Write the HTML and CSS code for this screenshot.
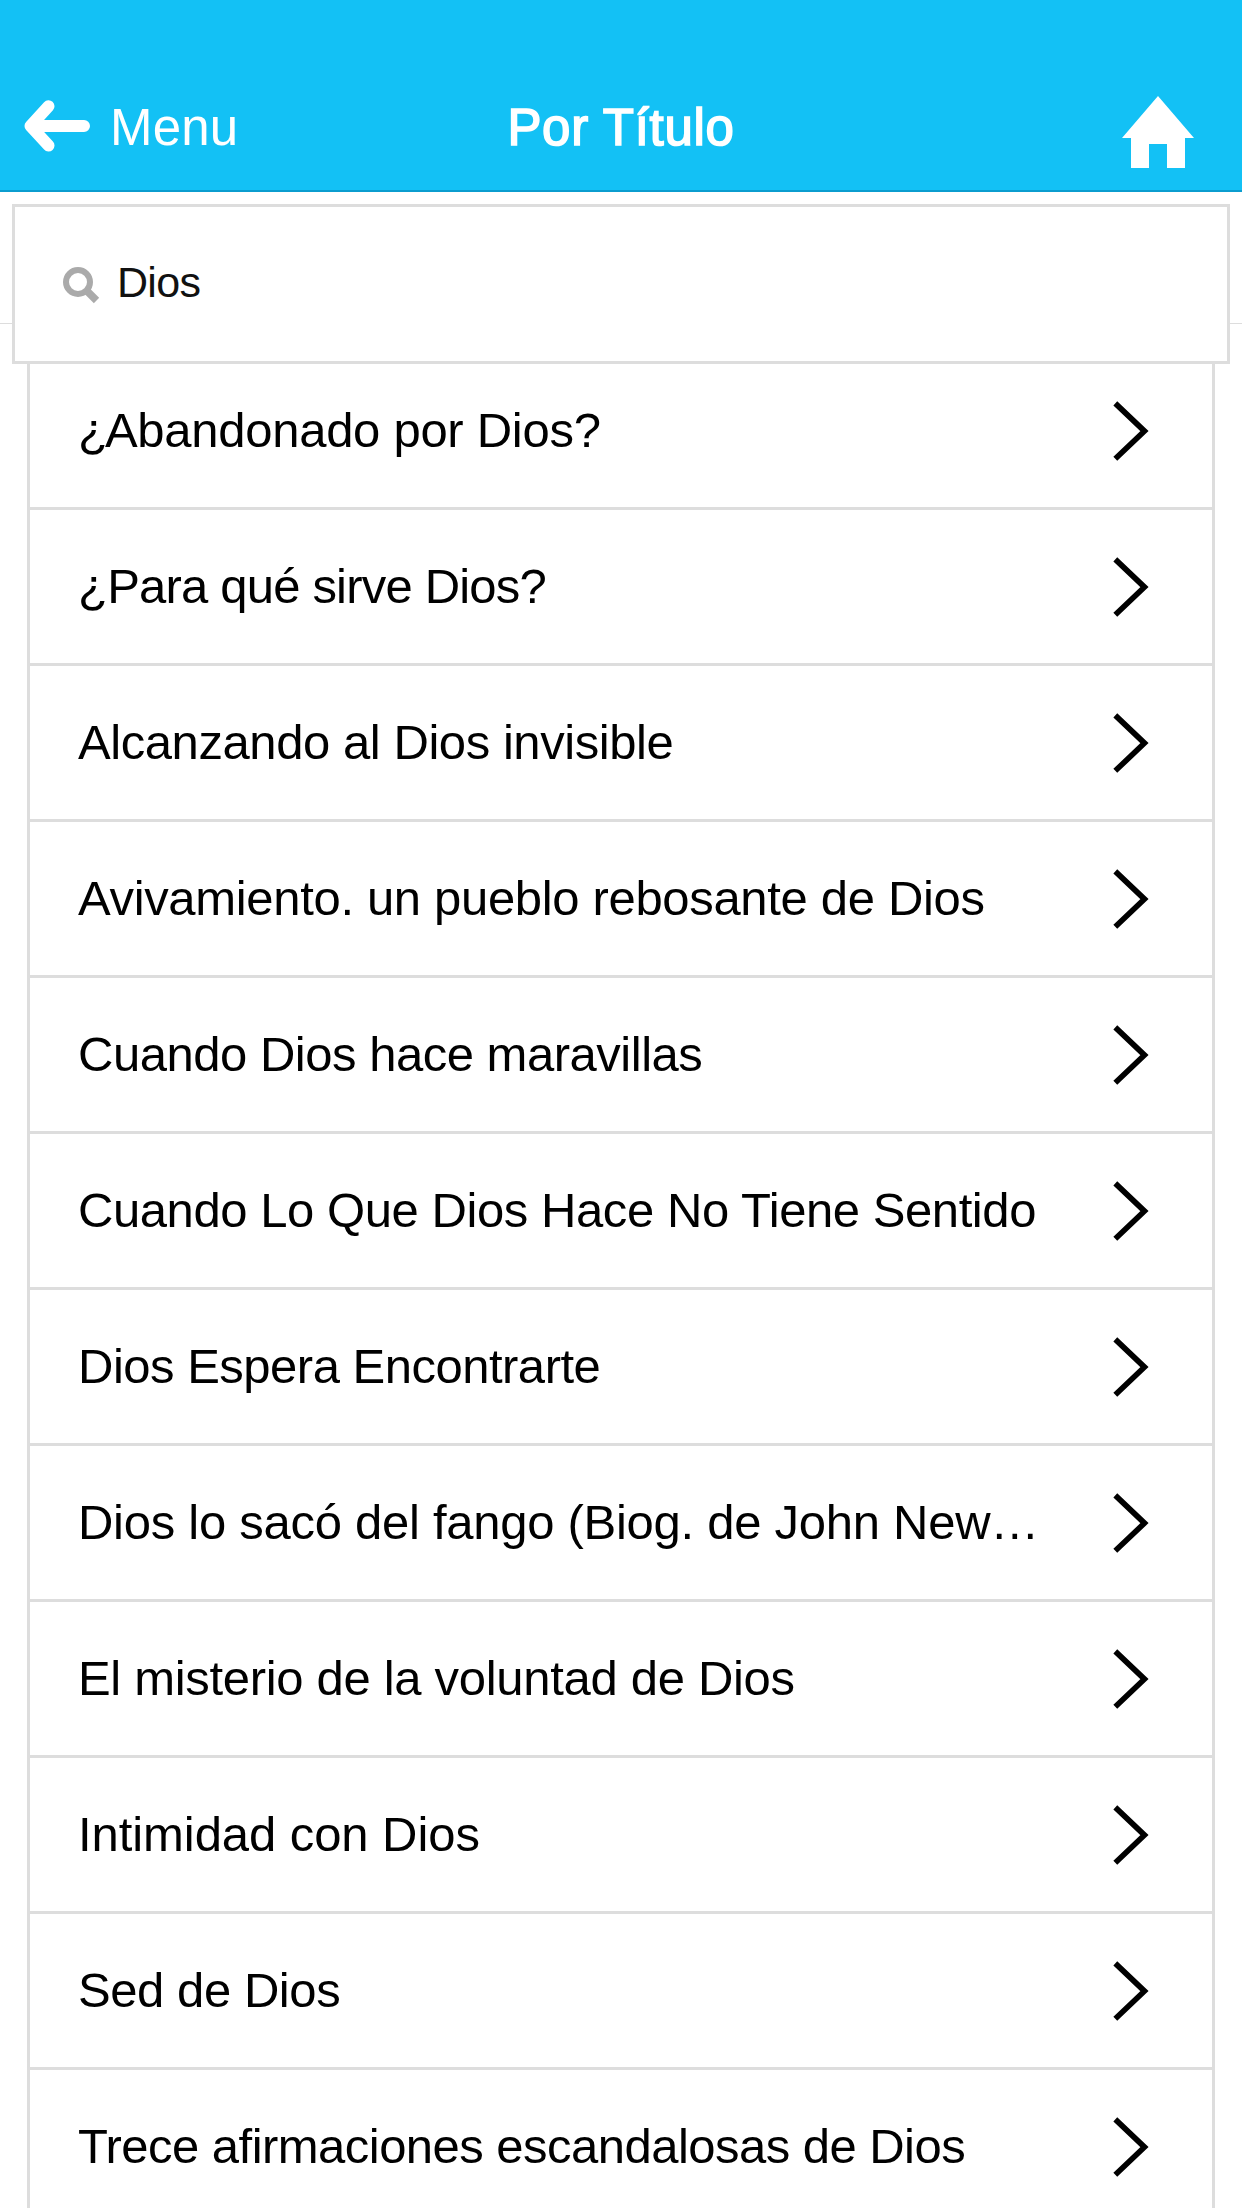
FILE: index.html
```html
<!DOCTYPE html>
<html lang="es">
<head>
<meta charset="utf-8">
<title>Por Título</title>
<link rel="stylesheet" href="styles.css">
</head>
<body>
<header class="bar">
  <a class="back">
    <svg width="66" height="52" viewBox="0 0 66 52" fill="none" stroke="#fff" stroke-width="12" stroke-linecap="round" stroke-linejoin="round"><path d="M24.500 6.300L6.500 26L24.500 45.500M9 26H60"/></svg>
    <span class="back-label">Menu</span>
  </a>
  <h1 class="title">Por Título</h1>
  <a class="home"><svg width="72" height="72" viewBox="0 0 72 72" fill="#fff"><path d="M36 0L72 42H63V72H45V48H27V72H9V42H0Z"/></svg></a>
</header>
<div class="search-area">
  <div class="search">
    <svg class="lens" width="37" height="37" viewBox="0 0 37 37" fill="none" stroke="#aaa"><circle cx="15" cy="15" r="12" stroke-width="6"/><path d="M23 23L33.500 33.500" stroke-width="7.500"/></svg>
    <span class="query">Dios</span>
  </div>
</div>
<svg width="0" height="0" class="defs"><symbol id="chev" viewBox="0 0 38 62"><path d="M2.300 3.400L31.500 31.100L2.300 58.800"/></symbol></svg>
<ul class="list">
  <li class="row"><span class="name"><span class="mark">¿</span>Abandonado por Dios?</span><svg class="chev"><use href="#chev"/></svg></li>
  <li class="row"><span class="name">¿Para qué sirve Dios?</span><svg class="chev"><use href="#chev"/></svg></li>
  <li class="row"><span class="name">Alcanzando al Dios invisible</span><svg class="chev"><use href="#chev"/></svg></li>
  <li class="row"><span class="name">Avivamiento. un pueblo rebosante de Dios</span><svg class="chev"><use href="#chev"/></svg></li>
  <li class="row"><span class="name">Cuando Dios hace maravillas</span><svg class="chev"><use href="#chev"/></svg></li>
  <li class="row"><span class="name">Cuando Lo Que Dios Hace No Tiene Sentido</span><svg class="chev"><use href="#chev"/></svg></li>
  <li class="row"><span class="name">Dios Espera Encontrarte</span><svg class="chev"><use href="#chev"/></svg></li>
  <li class="row"><span class="name">Dios lo sacó del fango (Biog. de John New…</span><svg class="chev"><use href="#chev"/></svg></li>
  <li class="row"><span class="name">El misterio de la voluntad de Dios</span><svg class="chev"><use href="#chev"/></svg></li>
  <li class="row"><span class="name">Intimidad con Dios</span><svg class="chev"><use href="#chev"/></svg></li>
  <li class="row"><span class="name">Sed de Dios</span><svg class="chev"><use href="#chev"/></svg></li>
  <li class="row"><span class="name">Trece afirmaciones escandalosas de Dios</span><svg class="chev"><use href="#chev"/></svg></li>
</ul>
</body>
</html>
```
FILE: styles.css
```css
body { margin: 0; height: 2208px; overflow: hidden; background: #fff; color: #000; font-family: "Liberation Sans", Arial, sans-serif; }

/* Header */
.bar { box-sizing: border-box; height: 192px; padding: 62px 24px 0; display: grid; grid-template-columns: 1fr auto 1fr; align-items: center; background: #13c1f5; border-bottom: 2px solid #0b9dcf; color: #fff; }
.back { display: flex; align-items: center; gap: 20px; font-size: 51px; }
.back-label { margin-top: 2px; letter-spacing: .2px; }
.title { margin: 2px 0 0; font-size: 51px; font-weight: 400; letter-spacing: .7px; -webkit-text-stroke: 1.6px #fff; }
.home { justify-self: end; display: flex; margin: 12px 24px 0 0; }

/* Search field, with the rule that runs behind it */
.search-area { position: relative; padding: 12px 12px 0; z-index: 1; }
.search-area::before { content: ""; position: absolute; left: 0; right: 0; top: 131px; height: 1px; background: #ddd; }
.search { position: relative; box-sizing: border-box; height: 160px; padding-left: 48px; display: flex; align-items: center; gap: 17px; border: 3px solid #ddd; background: #fff; }
.lens { margin-top: 2px; }
.query { margin-bottom: 4px; font-size: 43px; letter-spacing: -.7px; color: #111; }

/* Results */
.defs { display: block; }
.list { list-style: none; margin: -10px 27px 0; padding: 0; border: solid #ddd; border-width: 0 3px; }
.row { box-sizing: border-box; height: 156px; padding: 0 61px 0 48px; display: flex; align-items: center; justify-content: space-between; border-bottom: 3px solid #ddd; white-space: nowrap; font-size: 49px; letter-spacing: -.43px; }
.name { margin-bottom: 2px; }
.mark { letter-spacing: -3px; }
.row:nth-child(1) { letter-spacing: -.28px; }
.row:nth-child(2) { letter-spacing: -.8px; }
.row:nth-child(4) { letter-spacing: -.33px; }
.row:nth-child(5) { letter-spacing: -.48px; }
.row:nth-child(7) { letter-spacing: -.5px; }
.row:nth-child(8) { letter-spacing: -.27px; }
.row:nth-child(9) { letter-spacing: -.31px; }
.row:nth-child(10) { letter-spacing: -.07px; }
.row:nth-child(12) { letter-spacing: -.53px; }
.chev { flex: none; width: 38px; height: 62px; fill: none; stroke: #000; stroke-width: 5.6; }
```
